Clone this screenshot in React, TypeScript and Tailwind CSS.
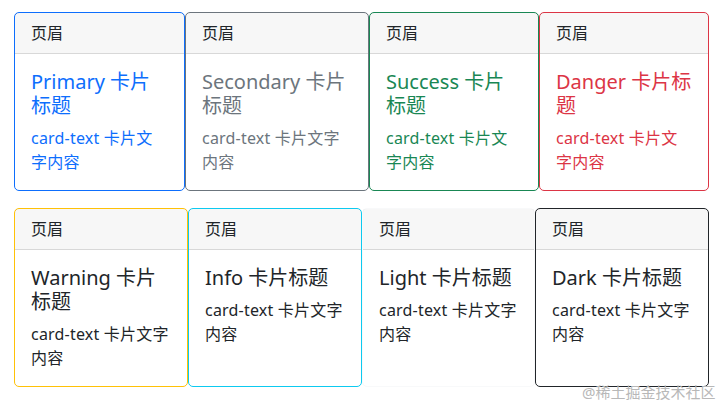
import React from "react";

interface CardProps {
  title: string;
  width: string;
  border: string;
  text: string;
}

const Card: React.FC<CardProps> = ({ title, width, border, text }) => {
  return (
    <div className={`${width} ${border} flex flex-col rounded-[5px] border bg-white`}>
      <div className="border-b border-black/[0.125] bg-black/[0.03] px-4 py-2 leading-6 text-[#212529]">
        页眉
      </div>
      <div className={`${text} flex-1 p-4`}>
        <h5 className="mb-2 text-[20px] leading-6">{title}</h5>
        <p className="leading-6 tracking-[0.2px]">card-text 卡片文字内容</p>
      </div>
    </div>
  );
};

export default function App() {
  return (
    <div
      className="relative h-[410px] w-[727px] bg-white pl-[14px] pt-3 text-base"
      style={{ fontFamily: '"Noto Sans", "Noto Sans CJK SC", sans-serif' }}
    >
      <div className="flex">
        <Card title="Primary 卡片标题" width="w-[171px]" border="border-[#0d6efd]" text="text-[#0d6efd]" />
        <Card title="Secondary 卡片标题" width="w-[184px]" border="border-[#6c757d]" text="text-[#6c757d]" />
        <Card title="Success 卡片标题" width="w-[170px]" border="border-[#198754]" text="text-[#198754]" />
        <Card title="Danger 卡片标题" width="w-[170px]" border="border-[#dc3545]" text="text-[#dc3545]" />
      </div>
      <div className="mt-[17px] flex">
        <Card title="Warning 卡片标题" width="w-[174px]" border="border-[#ffc107]" text="text-[#212529]" />
        <Card title="Info 卡片标题" width="w-[174px]" border="border-[#0dcaf0]" text="text-[#212529]" />
        <Card title="Light 卡片标题" width="w-[173px]" border="border-[#f8f9fa]" text="text-[#212529]" />
        <Card title="Dark 卡片标题" width="w-[174px]" border="border-[#212529]" text="text-[#212529]" />
      </div>
      <div className="absolute left-[582px] top-[381px] text-[15px] text-[#b8b8b8]">@稀土掘金技术社区</div>
    </div>
  );
}
